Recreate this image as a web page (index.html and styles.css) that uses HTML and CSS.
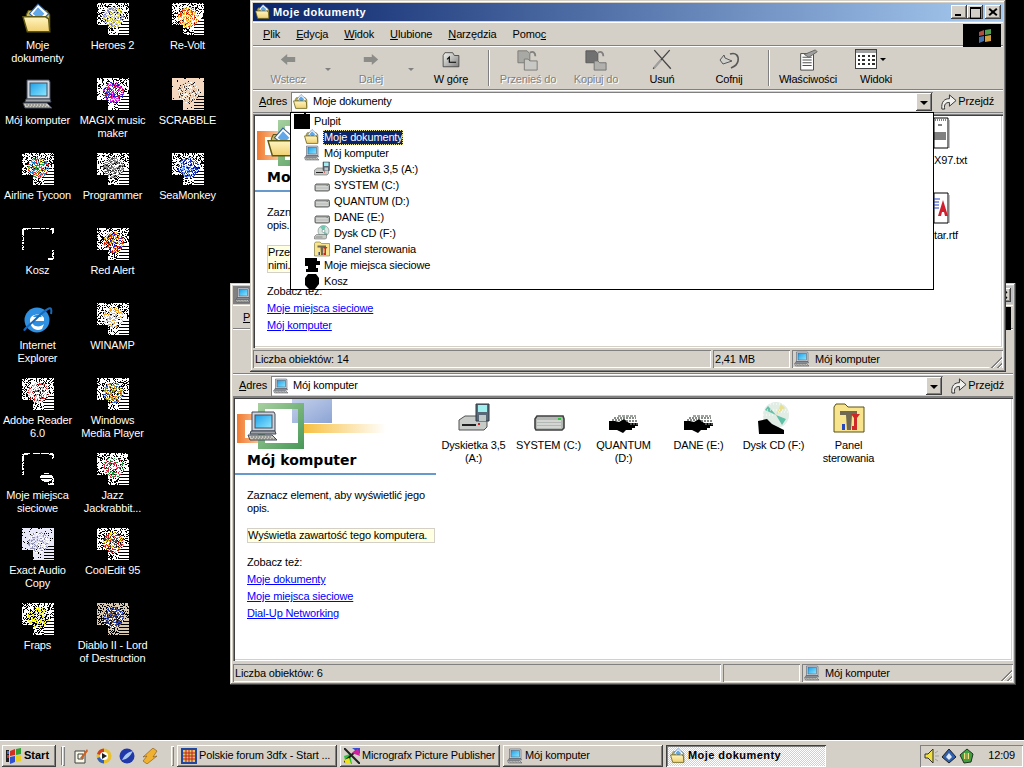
FILE: index.html
```html
<!DOCTYPE html>
<html lang="pl">
<head>
<meta charset="utf-8">
<title>Moje dokumenty</title>
<link rel="stylesheet" href="styles.css">
</head>
<body>
<svg class="defs" width="0" height="0" aria-hidden="true">
  <defs>
    <linearGradient id="g-screen" x1="0" y1="0" x2="1" y2="1"><stop offset="0" stop-color="#1ea0e8"/><stop offset="1" stop-color="#8fe8ff"/></linearGradient>
    <linearGradient id="g-folder" x1="0" y1="0" x2="0" y2="1"><stop offset="0" stop-color="#fff4c0"/><stop offset="1" stop-color="#f0d070"/></linearGradient>
    <linearGradient id="g-yellow" x1="0" y1="0" x2="1" y2="0"><stop offset="0" stop-color="#f8c040"/><stop offset="1" stop-color="#fff" /></linearGradient>
    <linearGradient id="g-blue" x1="0" y1="0" x2="1" y2="1"><stop offset="0" stop-color="#c4d0ec"/><stop offset="1" stop-color="#8ca4d4"/></linearGradient>
    <linearGradient id="g-orange" x1="0" y1="0" x2="1" y2="0"><stop offset="0" stop-color="#f07a30"/><stop offset="1" stop-color="#fcd0a8"/></linearGradient>
    <linearGradient id="g-green" x1="0" y1="0" x2="1" y2="1"><stop offset="0" stop-color="#a8d0a0"/><stop offset="1" stop-color="#489858"/></linearGradient>
    <linearGradient id="g-gray" x1="0" y1="0" x2="1" y2="1"><stop offset="0" stop-color="#f4f4f0"/><stop offset="1" stop-color="#808080"/></linearGradient>
    <symbol id="i-folder" viewBox="1 2 30 30">
      <path d="M5 13 7 9h17l3 4v14H7z" fill="#c8b860" stroke="#605810"/>
      <path d="M16 3 26 12 18 20 8 12z" fill="#fff" stroke="#3060a0"/>
      <path d="M16 6 22 12 17 17 11 12z" fill="#60a8e8"/>
      <path d="M2 15h21l3 2 1 12H6z" fill="url(#g-folder)" stroke="#605810" stroke-width="1.4"/>
    </symbol>
    <symbol id="i-computer" viewBox="0 0 32 32">
      <path d="M5 2h22l1 2v17H5z" fill="#d0d4dc" stroke="#404858"/>
      <rect x="8" y="5" width="17" height="13" fill="url(#g-screen)" stroke="#405060"/>
      <path d="M4 21h24l1 3H3z" fill="#a0a4a8" stroke="#404858"/>
      <path d="M1 25h24l5 5H3z" fill="#c8c8c0" stroke="#404858"/>
      <path d="M4 27h20M6 29h22" stroke="#707070" stroke-dasharray="2 1"/>
    </symbol>
    <symbol id="i-floppy" viewBox="0 0 32 32">
      <path d="M1 18 7 14h22v11l-3 3H1z" fill="#c8ccc8" stroke="#505050"/>
      <path d="M4 22h14v2H4z" fill="#202020"/><rect x="20" y="21" width="2" height="2" fill="#d02020"/>
      <path d="M18 2h13v17H18z" fill="#586878" stroke="#303840"/>
      <rect x="20" y="3" width="9" height="7" fill="#a0f0f0"/><rect x="21" y="13" width="7" height="6" fill="#c0c8c8"/>
    </symbol>
    <symbol id="i-hdd" viewBox="0 0 32 32">
      <g transform="translate(0 3)">
        <path d="M2 14 4 11h26l1 3v9l-2 2H3l-1-2z" fill="#b4b8b4" stroke="#404040" stroke-width="1.6"/>
        <path d="M4 16h24M4 19h24M4 22h24" stroke="#f4f4f4"/><rect x="25" y="13" width="3" height="2" fill="#30c040"/>
      </g>
    </symbol>
    <symbol id="i-hdd-bad" viewBox="0 0 32 32">
      <g transform="translate(0 3)">
        <path d="M1 16h6l4 1 5-3 5 4h9v3h-3v2h-3v2H18l-3 3-6-3H1z" fill="#000"/>
        <path d="M6 13h22M4 15h10M18 16h12M22 19h8" stroke="#606660" stroke-width="1.4" stroke-dasharray="2 1"/>
        <path d="M10 11h18" stroke="#808880" stroke-width="1.4" stroke-dasharray="3 1"/>
      </g>
    </symbol>
    <symbol id="i-cd" viewBox="0 0 32 32">
      <circle cx="19" cy="12" r="11" fill="#d8e8e0" stroke="#607070"/>
      <path d="M19 12 12 4a11 11 0 0 1 12-1zM19 12l9 6a11 11 0 0 1-7 5z" fill="#70c8b0"/>
      <circle cx="19" cy="12" r="3" fill="#fff" stroke="#607070"/>
      <path d="M1 23 5 19h20v7l-2 2H1z" fill="#c8ccc8" stroke="#505050"/>
      <path d="M3 24h14" stroke="#505050"/>
    </symbol>
    <symbol id="i-cd-bad" viewBox="0 0 32 32">
      <circle cx="18" cy="13" r="13" fill="#e0ece4"/>
      <path d="M18 13 10 4 7 8zM18 13l10 4-4 6z" fill="#60c0a8"/><path d="M18 13l5-11 4 4z" fill="#e8e090"/>
      <path d="M9 2h18M6 8h24M5 13h10M20 10h10" stroke="#fff" stroke-dasharray="1 2"/>
      <path d="M0 19 9 17 14 22 20 25 26 28 26 32H1z" fill="#000"/>
    </symbol>
    <symbol id="i-panel" viewBox="0 0 32 32">
      <path d="M1 5 3 2h9l3 3h16v25H1z" fill="#f8e48c" stroke="#585010"/>
      <path d="M7 9h17v4h-5l-1 15h-4l-1-15H7z" fill="#706850"/>
      <path d="M18 12l3 4v12h3V16l3-4z" fill="#d02828"/><rect x="9" y="22" width="3" height="6" fill="#2848c0"/>
      <rect x="19" y="24" width="5" height="4" fill="#d02828"/>
    </symbol>
    <symbol id="i-up" viewBox="0 0 32 32">
      <path d="M2 8 5 3h14l3 5h8v20H2z" fill="url(#g-gray)" stroke="#404040" stroke-width="1.5"/>
      <path d="M9 15 13 11v2h0v7h12" fill="none" stroke="#000" stroke-width="2"/>
    </symbol>
    <symbol id="i-back" viewBox="0 0 20 16"><path d="M1 8 9 1v4h10v6H9v4z" fill="#8c8c88"/></symbol>
    <symbol id="i-forward" viewBox="0 0 20 16"><path d="M19 8 11 1v4H1v6h10v4z" fill="#8c8c88"/></symbol>
    <symbol id="i-move" viewBox="0 0 24 24">
      <path d="M1 2h10l3 3v10H1z" fill="#a8a8a4" stroke="#787874"/>
      <path d="M8 11h4l2 2h8v10H8z" fill="#c8c8c4" stroke="#787874"/>
      <path d="M14 4c4-2 6 0 6 4" fill="none" stroke="#808080" stroke-width="2"/>
    </symbol>
    <symbol id="i-copy" viewBox="0 0 24 24">
      <path d="M1 2h10l3 3v10H1z" fill="#707070" stroke="#585858"/>
      <path d="M10 13h4l2 2h7v8H10z" fill="#b0b0ac" stroke="#707070"/>
      <path d="M14 4c4-2 6 0 6 4" fill="none" stroke="#808080" stroke-width="2"/>
    </symbol>
    <symbol id="i-del" viewBox="0 0 20 20"><path d="M3 1 18 18M17 1 2 18" stroke="#484848" stroke-width="1.2" fill="none"/><path d="M3 17 9 10" stroke="#a0a0a0" stroke-width="2"/></symbol>
    <symbol id="i-undo" viewBox="0 0 22 18"><path d="M12 3c6-2 9 2 8 7s-5 6-7 7" fill="none" stroke="#585858" stroke-width="1.6"/><path d="M2 9 6 4l1 3 7 3-9 3z" fill="#d0d0cc" stroke="#585858"/></symbol>
    <symbol id="i-props" viewBox="0 0 24 24">
      <path d="M4 5h14v18H4z" fill="#fff" stroke="#404040"/><path d="M6 9h10M6 12h10M6 15h10M6 18h10" stroke="#404040"/>
      <path d="M8 6 20 1l2 2-9 6z" fill="#a0a0a0" stroke="#606060"/>
    </symbol>
    <symbol id="i-views" viewBox="0 0 22 20">
      <rect x="0.500" y="0.500" width="21" height="19" fill="#fff" stroke="#404040"/><rect x="1" y="1" width="20" height="3" fill="#a0a0a0"/>
      <path d="M3 7h2M7 7h3M13 7h2M17 7h3M3 11h2M7 11h3M13 11h2M17 11h3M3 15h2M7 15h3M13 15h2M17 15h3" stroke="#303030" stroke-width="2"/>
    </symbol>
    <symbol id="i-go" viewBox="0 0 18 18">
      <path d="M2 17C1 9 5 6 10 6V2l7 6-7 6v-4C6 10 4 12 5 17z" fill="#f0f0ec" stroke="#303030"/>
    </symbol>
    <symbol id="i-flag" viewBox="0 0 16 16">
      <path d="M2 4 7 2v5L2 8z" fill="#b05040"/><path d="M8 2l6-1v5l-6 1z" fill="#50a050"/>
      <path d="M2 9l5-1v5l-5 2z" fill="#4070b0"/><path d="M8 8l6-1v6l-6 1z" fill="#d0a040"/>
    </symbol>
    <symbol id="i-blob-net" viewBox="0 0 16 16"><path d="M1 1h12v3h3v4h-4v3h2v4H2v-3h2V9H1z" fill="#000"/></symbol>
    <symbol id="i-blob-bin" viewBox="0 0 16 16"><path d="M4 1h8l3 4v6l-4 5H5l-4-4V5z" fill="#000"/></symbol>
    <symbol id="i-blob-desk" viewBox="0 0 16 16"><path d="M0 1h10V0h2v1h4v15H0z" fill="#000"/></symbol>
    <symbol id="i-ie" viewBox="0 0 32 32">
      <circle cx="15" cy="17" r="12.500" fill="#2f8fe0"/>
      <path d="M8 17c0-6 11-8 14-2v3H10c0 6 8 7 12 3l-2 5c-6 3-12-1-12-9z" fill="#fff"/>
      <path d="M11 14c2-3 7-3 9 0z" fill="#2f8fe0"/>
      <path d="M4 26C-2 30 10 20 18 12 25 6 31 1 29 11" fill="none" stroke="#1a68b8" stroke-width="2"/>
    </symbol>
    <symbol id="i-start" viewBox="0 0 16 16">
      <path d="M0 2h3v12H0z" fill="#202020"/><path d="M1 3h2v3H1z" fill="#4070d0"/><path d="M1 7h2v3H1z" fill="#d03030"/>
      <path d="M4 3 9 1v6L4 8z" fill="#d03020"/><path d="M10 1l5-1v6l-5 1z" fill="#30a030"/>
      <path d="M4 9l5-1v6l-5 2z" fill="#3050d0"/><path d="M10 8l5-1v6l-5 1z" fill="#e8d020"/>
    </symbol>
    <symbol id="i-note" viewBox="0 0 16 16"><path d="M2 3h10v12H2z" fill="#f8f8e8" stroke="#404040"/><path d="M5 6h5v5H5z" fill="none" stroke="#404040"/><path d="M7 10 14 1l1 2-6 8z" fill="#d06020"/></symbol>
    <symbol id="i-media" viewBox="0 0 16 16"><circle cx="8" cy="8" r="7.500" fill="#e8c030"/><path d="M8 .5A7.500 7.500 0 0 0 1 6l7 2z" fill="#d04020"/><path d="M1 10a7.500 7.500 0 0 0 7 5.500V8z" fill="#3060c0"/><circle cx="8" cy="8" r="4" fill="#fff"/><path d="M6 5l5 3-5 3z" fill="#202020"/></symbol>
    <symbol id="i-sea" viewBox="0 0 16 16"><circle cx="8" cy="8" r="7.500" fill="#2038a8"/><path d="M3 12C6 6 9 4 14 3 11 8 9 11 3 12z" fill="#a8c8f0"/></symbol>
    <symbol id="i-amp" viewBox="0 0 16 16"><path d="M11 0 15 3 11 9 15 8 5 16 1 13 5 8 1 9z" fill="#f0b030" stroke="#805010" stroke-width=".6"/></symbol>
    <symbol id="i-3dfx" viewBox="0 0 16 16"><rect width="16" height="16" fill="#2048a0"/><rect x="2" y="2" width="12" height="12" fill="#e8c060"/><path d="M2 5h12M2 8h12M2 11h12M5 2v12M8 2v12M11 2v12" stroke="#c02020"/></symbol>
    <symbol id="i-pp" viewBox="0 0 16 16"><path d="M8 0h8v6z" fill="#3050e0"/><path d="M0 8 6 6l2 10H2z" fill="#30c040"/><path d="M0 0l16 16M0 14 14 1" stroke="#202020" stroke-width="2"/><path d="M8 5 14 0l2 8z" fill="#d020a0"/><path d="M0 12l5-2 2 6H2z" fill="#f0e020"/></symbol>
    <symbol id="i-speaker" viewBox="0 0 16 16"><path d="M1 6h3l5-5v14L4 10H1z" fill="#f0e040" stroke="#303030"/><path d="M11 5l3-2M11 8h4M11 11l3 2" stroke="#a0a0a0"/></symbol>
    <symbol id="i-tray2" viewBox="0 0 16 16"><path d="M8 1 15 9 8 15 1 9z" fill="#3060b0" stroke="#202020"/><path d="M8 5 11 9 8 12 5 9z" fill="#e0e8f0"/></symbol>
    <symbol id="i-tray3" viewBox="0 0 16 16"><path d="M2 7 9 1l6 5-2 8-7 1z" fill="#40a040" stroke="#203020"/><path d="M6 5h5v6H6z" fill="#f0e080"/><path d="M7 6h3M7 8h3M7 10h3" stroke="#206020"/></symbol>
    <symbol id="i-notepad" viewBox="0 0 16 32"><path d="M0 1h14v30H0z" fill="#fff" stroke="#000"/><path d="M15 3v28" stroke="#808080"/><path d="M1 3h12" stroke="#000" stroke-dasharray="1 1"/><path d="M4 8h4M0 16h12M0 18h12M0 20h12M0 22h12" stroke="#000"/></symbol>
    <symbol id="i-rtf" viewBox="0 0 16 32"><path d="M0 1h14v30H0z" fill="#fff" stroke="#000"/><path d="M15 3v28" stroke="#808080"/><path d="M0 7h6M0 10h5M0 13h5M0 16h5" stroke="#2040c0"/><path d="M4 24 9 8l5 16h-3l-1-4H8l-1 4z" fill="#d02030"/></symbol>
    <symbol id="i-banner" viewBox="0 0 200 50">
      <rect x="57" y="0" width="40" height="24" fill="url(#g-blue)"/>
      <rect x="2" y="15" width="26" height="29" fill="url(#g-orange)"/>
      <rect x="10" y="21" width="20" height="18" fill="#fff"/>
      <rect x="69" y="25" width="82" height="9" fill="url(#g-yellow)"/>
      <path d="M23 4h46v46H23zM30 10v34h33V10z" fill="url(#g-green)" fill-rule="evenodd"/>
    </symbol>
  </defs>
</svg>

<main class="desktop">
  <section class="icons">
    <div class="dicon"><svg class="i32"><use href="#i-folder"/></svg><span>Moje dokumenty</span></div>
    <div class="dicon"><svg class="i32"><use href="#i-computer"/></svg><span>Mój komputer</span></div>
    <div class="dicon"><svg class="noise" data-seed="11" data-pal="#e02020,#2090e0,#20a040,#f0c020,#fff"></svg><span>Airline Tycoon</span></div>
    <div class="dicon"><svg class="noise" data-frame="1" data-seed="12"></svg><span>Kosz</span></div>
    <div class="dicon"><svg class="i32"><use href="#i-ie"/></svg><span>Internet Explorer</span></div>
    <div class="dicon"><svg class="noise" data-seed="13" data-pal="#e02020,#fff,#c0c0c0,#fff"></svg><span>Adobe Reader 6.0</span></div>
    <div class="dicon"><svg class="noise" data-frame="2" data-seed="14"></svg><span>Moje miejsca sieciowe</span></div>
    <div class="dicon"><svg class="noise" data-seed="15" data-base="#e8e8f8" data-dens="0.92" data-pal="#fff,#d8d8f0,#9090b0"></svg><span>Exact Audio Copy</span></div>
    <div class="dicon"><svg class="noise" data-seed="16" data-pal="#f0f000,#f0f000,#fff,#000"></svg><span>Fraps</span></div>

    <div class="dicon"><svg class="noise" data-seed="21" data-pal="#e8e040,#8080c0,#fff,#c0c0c0"></svg><span>Heroes 2</span></div>
    <div class="dicon"><svg class="noise" data-seed="22" data-pal="#f020e0,#fff,#e02020,#2020c0"></svg><span>MAGIX music maker</span></div>
    <div class="dicon"><svg class="noise" data-seed="23" data-pal="#fff,#a0a0a0,#404040,#808080"></svg><span>Programmer</span></div>
    <div class="dicon"><svg class="noise" data-seed="24" data-pal="#f03010,#f8c020,#2020c0,#fff"></svg><span>Red Alert</span></div>
    <div class="dicon"><svg class="noise" data-seed="25" data-pal="#f0a020,#fff,#fff,#c0c0c0"></svg><span>WINAMP</span></div>
    <div class="dicon"><svg class="noise" data-seed="26" data-pal="#e06020,#2050c0,#80a040,#d0b020,#fff"></svg><span>Windows Media Player</span></div>
    <div class="dicon"><svg class="noise" data-seed="27" data-pal="#d02040,#20a040,#fff,#fff"></svg><span>Jazz Jackrabbit...</span></div>
    <div class="dicon"><svg class="noise" data-seed="28" data-pal="#f0d000,#e02020,#fff,#404040"></svg><span>CoolEdit 95</span></div>
    <div class="dicon"><svg class="noise" data-seed="29" data-base="#d8c8b0" data-pal="#2040c0,#202040,#fff,#806040"></svg><span>Diablo II - Lord of Destruction</span></div>

    <div class="dicon"><svg class="noise" data-seed="31" data-pal="#f04010,#f8c020,#fff,#f8e080"></svg><span>Re-Volt</span></div>
    <div class="dicon"><svg class="noise" data-seed="32" data-base="#f4d8c0" data-dens="0.95" data-pal="#f0d8c0,#e0c0a0,#fff,#404040"></svg><span>SCRABBLE</span></div>
    <div class="dicon"><svg class="noise" data-seed="33" data-pal="#2030c0,#80b0f0,#fff,#2030c0"></svg><span>SeaMonkey</span></div>
  </section>

  <!-- Okno: Mój komputer (pod spodem) -->
  <article class="win win-back">
    <header class="title title-off">
      <svg class="i16"><use href="#i-computer"/></svg>
      <span class="caps"><b class="cap cap-min"></b><b class="cap cap-max"></b><b class="cap cap-close"></b></span>
    </header>
    <nav class="menu">
      <span><u>P</u>lik</span>
      <div class="throbber"><svg class="i16"><use href="#i-flag"/></svg></div>
    </nav>
    <div class="toolbar"></div>
    <div class="addr">
      <span class="addr-label"><u>A</u>dres</span>
      <div class="combo"><svg class="i16"><use href="#i-computer"/></svg><span>Mój komputer</span><i class="combo-btn"></i></div>
      <div class="go"><svg class="i-go"><use href="#i-go"/></svg><span>Przejdź</span></div>
    </div>
    <div class="body">
      <aside class="panel">
        <div class="banner"><svg class="banner-bg"><use href="#i-banner"/></svg><svg class="banner-icon"><use href="#i-computer"/></svg></div>
        <h2>Mój komputer</h2>
        <p class="p-desc">Zaznacz element, aby wyświetlić jego opis.</p>
        <p class="tip">Wyświetla zawartość tego komputera.</p>
        <p class="see">Zobacz też:</p>
        <a class="lnk">Moje dokumenty</a>
        <a class="lnk">Moje miejsca sieciowe</a>
        <a class="lnk">Dial-Up Networking</a>
      </aside>
      <div class="files">
        <div class="file"><svg class="i32"><use href="#i-floppy"/></svg><span>Dyskietka 3,5 (A:)</span></div>
        <div class="file"><svg class="i32"><use href="#i-hdd"/></svg><span>SYSTEM (C:)</span></div>
        <div class="file"><svg class="i32"><use href="#i-hdd-bad"/></svg><span>QUANTUM (D:)</span></div>
        <div class="file"><svg class="i32"><use href="#i-hdd-bad"/></svg><span>DANE (E:)</span></div>
        <div class="file"><svg class="i32"><use href="#i-cd-bad"/></svg><span>Dysk CD (F:)</span></div>
        <div class="file"><svg class="i32"><use href="#i-panel"/></svg><span>Panel sterowania</span></div>
      </div>
    </div>
    <footer class="status">
      <div class="sp sp-main">Liczba obiektów: 6</div>
      <div class="sp sp-size"></div>
      <div class="sp sp-zone"><svg class="i16"><use href="#i-computer"/></svg><span>Mój komputer</span></div>
      <i class="grip"></i>
    </footer>
  </article>

  <!-- Okno: Moje dokumenty (aktywne) -->
  <article class="win win-front">
    <header class="title">
      <svg class="i16"><use href="#i-folder"/></svg>
      <span class="title-text">Moje dokumenty</span>
      <span class="caps"><b class="cap cap-min"></b><b class="cap cap-max"></b><b class="cap cap-close"></b></span>
    </header>
    <nav class="menu">
      <span><u>P</u>lik</span><span><u>E</u>dycja</span><span><u>W</u>idok</span><span><u>U</u>lubione</span><span><u>N</u>arzędzia</span><span>Pomo<u>c</u></span>
      <div class="throbber"><svg class="i16"><use href="#i-flag"/></svg></div>
    </nav>
    <div class="toolbar">
      <div class="tb w68 off"><svg class="t-back"><use href="#i-back"/></svg><span>Wstecz</span></div>
      <i class="drop w15"></i>
      <div class="tb w68 off"><svg class="t-back"><use href="#i-forward"/></svg><span>Dalej</span></div>
      <i class="drop w13"></i>
      <div class="tb w66"><svg class="t-up"><use href="#i-up"/></svg><span>W górę</span></div>
      <i class="sep"></i>
      <div class="tb w68 off"><svg class="t-ico"><use href="#i-move"/></svg><span>Przenieś do</span></div>
      <div class="tb w68 off"><svg class="t-ico"><use href="#i-copy"/></svg><span>Kopiuj do</span></div>
      <div class="tb w64"><svg class="t-ico"><use href="#i-del"/></svg><span>Usuń</span></div>
      <div class="tb w70"><svg class="t-ico"><use href="#i-undo"/></svg><span>Cofnij</span></div>
      <i class="sep"></i>
      <div class="tb w68"><svg class="t-ico"><use href="#i-props"/></svg><span>Właściwości</span></div>
      <div class="tb w68"><div class="views"><svg class="t-views"><use href="#i-views"/></svg><i class="mini-arrow"></i></div><span>Widoki</span></div>
    </div>
    <div class="addr">
      <span class="addr-label"><u>A</u>dres</span>
      <div class="combo"><svg class="i16"><use href="#i-folder"/></svg><span>Moje dokumenty</span><i class="combo-btn"></i></div>
      <div class="go"><svg class="i-go"><use href="#i-go"/></svg><span>Przejdź</span></div>
    </div>
    <div class="body">
      <aside class="panel">
        <div class="banner"><svg class="banner-bg"><use href="#i-banner"/></svg><svg class="banner-icon"><use href="#i-folder"/></svg></div>
        <h2>Mo</h2>
        <p class="p-desc">Zazn<br>opis.</p>
        <p class="tip tip-two">Prze<br>nimi.</p>
        <p class="see">Zobacz też:</p>
        <a class="lnk">Moje miejsca sieciowe</a>
        <a class="lnk">Mój komputer</a>
      </aside>
      <div class="docs">
        <div class="doc"><svg class="i-half"><use href="#i-notepad"/></svg><span>X97.txt</span></div>
        <div class="doc"><svg class="i-half"><use href="#i-rtf"/></svg><span>tar.rtf</span></div>
      </div>
    </div>
    <footer class="status">
      <div class="sp sp-main">Liczba obiektów: 14</div>
      <div class="sp sp-size">2,41 MB</div>
      <div class="sp sp-zone"><svg class="i16"><use href="#i-computer"/></svg><span>Mój komputer</span></div>
      <i class="grip"></i>
    </footer>
  </article>

  <!-- Rozwinięta lista adresu -->
  <ul class="tree">
    <li class="l0"><svg class="i16"><use href="#i-blob-desk"/></svg><span>Pulpit</span></li>
    <li class="l1"><svg class="i16"><use href="#i-folder"/></svg><span class="sel">Moje dokumenty</span></li>
    <li class="l1"><svg class="i16"><use href="#i-computer"/></svg><span>Mój komputer</span></li>
    <li class="l2"><svg class="i16"><use href="#i-floppy"/></svg><span>Dyskietka 3,5 (A:)</span></li>
    <li class="l2"><svg class="i16"><use href="#i-hdd"/></svg><span>SYSTEM (C:)</span></li>
    <li class="l2"><svg class="i16"><use href="#i-hdd"/></svg><span>QUANTUM (D:)</span></li>
    <li class="l2"><svg class="i16"><use href="#i-hdd"/></svg><span>DANE (E:)</span></li>
    <li class="l2"><svg class="i16"><use href="#i-cd"/></svg><span>Dysk CD (F:)</span></li>
    <li class="l2"><svg class="i16"><use href="#i-panel"/></svg><span>Panel sterowania</span></li>
    <li class="l1"><svg class="i16"><use href="#i-blob-net"/></svg><span>Moje miejsca sieciowe</span></li>
    <li class="l1"><svg class="i16"><use href="#i-blob-bin"/></svg><span>Kosz</span></li>
  </ul>
</main>

<footer class="taskbar">
  <div class="tbtn start"><svg class="i16"><use href="#i-start"/></svg><b>Start</b></div>
  <i class="grab"></i>
  <div class="quick">
    <svg class="i16"><use href="#i-note"/></svg>
    <svg class="i16"><use href="#i-media"/></svg>
    <svg class="i16"><use href="#i-sea"/></svg>
    <svg class="i16"><use href="#i-amp"/></svg>
  </div>
  <i class="grab"></i>
  <div class="tbtn task"><svg class="i16"><use href="#i-3dfx"/></svg><span>Polskie forum 3dfx - Start ...</span></div>
  <div class="tbtn task"><svg class="i16"><use href="#i-pp"/></svg><span>Micrografx Picture Publisher</span></div>
  <div class="tbtn task"><svg class="i16"><use href="#i-computer"/></svg><span>Mój komputer</span></div>
  <div class="tbtn task active"><svg class="i16"><use href="#i-folder"/></svg><b>Moje dokumenty</b></div>
  <div class="tray">
    <svg class="i16"><use href="#i-speaker"/></svg>
    <svg class="i16"><use href="#i-tray2"/></svg>
    <svg class="i16"><use href="#i-tray3"/></svg>
    <span class="clock">12:09</span>
  </div>
</footer>
<script src="noise.js"></script>
</body>
</html>
```

FILE: styles.css
```css
* { box-sizing: border-box; }
html, body { margin: 0; height: 768px; overflow: hidden; background: #000; }
body {
  display: flex; flex-direction: column; width: 1024px;
  font: 11px/13px "Liberation Sans", Arial, sans-serif; color: #000; letter-spacing: -.15px;
}
svg { display: block; flex: none; }
.defs { position: absolute; }
.i16 { width: 16px; height: 16px; }
.i32 { width: 32px; height: 32px; }

/* pulpit */
.desktop { position: relative; flex: 1; min-height: 0; }
.icons {
  display: grid; grid-auto-flow: column;
  grid-template-rows: repeat(9, 75px); grid-template-columns: repeat(3, 75px);
  padding-top: 3px;
}
.dicon { display: flex; flex-direction: column; align-items: center; color: #fff; text-align: center; }
.dicon span { margin-top: 4px; width: 74px; }
.noise { width: 32px; height: 32px; shape-rendering: crispEdges; }

/* okna */
.win {
  position: absolute; display: flex; flex-direction: column; padding: 3px;
  background: #d4d0c8;
  box-shadow: inset -1px -1px #404040, inset 1px 1px #d4d0c8, inset -2px -2px #808080, inset 2px 2px #fff;
}
.win-front { left: 250px; top: 0; width: 756px; height: 372px; }
.win-back { left: 230px; top: 283px; width: 786px; height: 402px; }

.title {
  display: flex; align-items: center; flex: none; height: 18px; margin-bottom: 1px; padding: 0 2px;
  background: linear-gradient(90deg, #0a246a, #a6caf0); color: #fff;
}
.title-off { background: linear-gradient(90deg, #808080, #c0c0c0); color: #d4d0c8; }
.title-text { margin-left: 2px; font: 700 11px/16px "Liberation Sans", sans-serif; letter-spacing: .45px; }
.caps { display: flex; margin-left: auto; }
.cap {
  display: block; position: relative; width: 16px; height: 14px;
  background: #d4d0c8; box-shadow: inset -1px -1px #404040, inset 1px 1px #fff, inset -2px -2px #808080;
}
.cap-close { margin-left: 2px; }
.cap-min::after { content: ""; position: absolute; left: 4px; bottom: 3px; width: 6px; height: 2px; background: #000; }
.cap-max::after { content: ""; position: absolute; left: 3px; top: 2px; width: 9px; height: 9px; border: 1px solid #000; border-top-width: 2px; }
.cap-close::before, .cap-close::after { content: ""; position: absolute; left: 3px; top: 6px; width: 10px; height: 2px; background: #000; transform: rotate(40deg); }
.cap-close::after { transform: rotate(-40deg); }

.menu {
  display: flex; align-items: center; flex: none; gap: 16px; height: 24px; padding-left: 10px;
  border-top: 1px solid #fff; border-bottom: 1px solid #808080; position: relative;
}
.menu u, .addr-label u { text-underline-offset: 1px; }
.throbber {
  position: absolute; right: 2px; top: 1px; width: 38px; height: 23px; background: #000;
  display: flex; align-items: center; justify-content: center;
}
.throbber svg { filter: blur(.5px); margin-left: 6px; }

.toolbar {
  display: flex; align-items: stretch; flex: none; height: 44px; padding: 3px 0 0 1px;
  border-top: 1px solid #fff; border-bottom: 1px solid #808080;
}
.win-back .toolbar { height: 45px; }
.tb { display: flex; flex-direction: column; align-items: center; justify-content: flex-end; padding-bottom: 3px; flex: none; }
.tb span { margin-top: 2px; white-space: nowrap; }
.tb.off { color: #808080; }
.tb.off span { text-shadow: 1px 1px 0 #fff; }
.w64 { width: 64px; } .w66 { width: 66px; } .w68 { width: 68px; } .w70 { width: 70px; }
.w13 { width: 13px; } .w15 { width: 15px; }
.t-back { width: 16px; height: 13px; margin-bottom: 5px; }
.t-up { width: 20px; height: 18px; margin-bottom: 2px; }
.t-ico { width: 22px; height: 22px; }
.t-views { width: 22px; height: 20px; }
.views { display: flex; align-items: center; gap: 3px; margin-left: -11px; margin-bottom: 2px; }
.mini-arrow { width: 0; height: 0; border: 3px solid transparent; border-top: 3px solid #000; border-bottom: 0; }
.drop { position: relative; flex: none; }
.drop::after { content: ""; position: absolute; left: 3px; top: 18px; border: 3px solid transparent; border-top-color: #808080; border-bottom: 0; }
.sep { flex: none; width: 2px; margin: 0 4px 3px; background: #808080; border-right: 1px solid #fff; }

.addr {
  display: flex; align-items: center; flex: none; height: 23px; padding-left: 6px;
  border-top: 1px solid #fff; border-bottom: 1px solid #808080;
}
.addr-label { width: 32px; flex: none; }
.combo {
  display: flex; align-items: center; flex: 1; height: 20px; gap: 4px; padding-left: 2px; background: #fff;
  box-shadow: inset 1px 1px #808080, inset -1px -1px #d4d0c8;
}
.combo-btn {
  position: relative; margin-left: auto; margin-right: 1px; width: 16px; height: 18px; background: #d4d0c8;
  box-shadow: inset -1px -1px #404040, inset 1px 1px #fff, inset -2px -2px #808080;
}
.combo-btn::after { content: ""; position: absolute; left: 4px; top: 8px; border: 4px solid transparent; border-top-color: #000; border-bottom: 0; }
.go { display: flex; align-items: center; justify-content: flex-end; gap: 1px; width: 70px; flex: none; padding-right: 9px; }
.i-go { width: 17px; height: 17px; }

.body {
  position: relative; display: flex; flex: 1; min-height: 0; margin-top: 1px; background: #fff;
  box-shadow: inset 1px 1px #808080, inset 2px 2px #404040, inset -1px -1px #fff, inset -2px -2px #d4d0c8;
}
.win-back .body { margin-top: 0; }
.panel { width: 201px; flex: none; margin: 2px 0 0 2px; display: flex; flex-direction: column; }
.banner { position: relative; height: 50px; flex: none; }
.banner-bg { width: 200px; height: 50px; }
.banner-icon { position: absolute; left: 12px; top: 11px; width: 32px; height: 32px; }
.panel h2 {
  margin: 2px 0 0; padding: 0 0 3px 12px; border-bottom: 2px solid #6699cc; height: 24px;
  font: 700 14px/18px "DejaVu Sans", sans-serif; letter-spacing: 0; white-space: nowrap;
}
.panel p { margin: 0 0 0 12px; width: 188px; }
.panel .p-desc { margin-top: 14px; }
.panel .tip { margin-top: 13px; padding: 1px; background: #ffffe1; box-shadow: inset 0 0 0 1px #d4d0c8; }
.panel .tip-two { margin-bottom: -1px; }
.panel .see { margin-top: 13px; }
.lnk { margin: 4px 0 0 12px; color: #0000ff; text-decoration: underline; }

.files { display: flex; align-items: flex-start; padding-top: 5px; }
.file { width: 75px; display: flex; flex-direction: column; align-items: center; text-align: center; }
.file span { margin-top: 5px; width: 74px; }
.docs { margin-left: auto; padding-top: 3px; width: 69px; display: flex; flex-direction: column; }
.doc { height: 75px; display: flex; flex-direction: column; }
.doc span { margin-top: 5px; }
.i-half { width: 16px; height: 32px; }

.status { display: flex; flex: none; height: 20px; position: relative; padding-top: 1px; margin-top: 1px; }
.win-back .status { padding-top: 2px; }
.sp { display: flex; align-items: center; gap: 5px; height: 18px; padding-left: 2px; box-shadow: inset 1px 1px #808080, inset -1px -1px #fff; white-space: nowrap; }
.sp-main { flex: 1; margin-right: 2px; }
.sp-size { width: 77px; margin-right: 2px; }
.sp-zone { width: 211px; }
.grip {
  position: absolute; right: 1px; bottom: 1px; width: 13px; height: 13px;
  background: repeating-linear-gradient(135deg, #d4d0c8 0 2px, #808080 2px 3.500px, #fff 3.500px 4.200px);
  clip-path: polygon(100% 0, 100% 100%, 0 100%);
}

/* lista */
.tree {
  position: absolute; left: 290px; top: 112px; width: 644px; height: 178px; margin: 0; padding: 0;
  list-style: none; background: #fff; border: 1px solid #000;
}
.tree li { display: flex; align-items: center; gap: 4px; height: 16px; }
.l0 { padding-left: 3px; } .l1 { padding-left: 13px; } .l2 { padding-left: 23px; }
.sel { background: #0a246a; color: #fff; outline: 1px dotted #f0e8a0; outline-offset: -1px; padding: 1px 0 1px 1px; margin-left: -1px; }

/* pasek zadań */
.taskbar {
  display: flex; align-items: center; flex: none; height: 28px; padding: 2px 0 0 2px; background: #d4d0c8;
  border-top: 1px solid #fff; box-shadow: inset 0 1px #d4d0c8;
}
.tbtn {
  display: flex; align-items: center; gap: 2px; flex: none; height: 22px; background: #d4d0c8; padding-left: 4px; white-space: nowrap;
  box-shadow: inset -1px -1px #404040, inset 1px 1px #fff, inset -2px -2px #808080;
}
.start { width: 54px; letter-spacing: 0; }
.task { width: 160px; margin-right: 3px; }
.task span { overflow: hidden; }
.active {
  box-shadow: inset 1px 1px #404040, inset -1px -1px #fff, inset 2px 2px #808080;
  background: conic-gradient(#fff 25%, #d4d0c8 0 50%, #fff 0 75%, #d4d0c8 0) 0 0 / 2px 2px;
}
.active b { letter-spacing: .45px; }
.grab { flex: none; width: 3px; height: 20px; margin: 0 2px 0 4px; background: #d4d0c8; box-shadow: inset 1px 1px #fff, inset -1px -1px #808080; border-left: 0; }
.grab + .quick { margin-left: 6px; }
.start + .grab { margin-left: 6px; box-shadow: -2px 0 0 -1px #808080, inset 1px 1px #fff, inset -1px -1px #808080; }
.quick { display: flex; gap: 7px; margin-right: 9px; }
.quick + .grab { margin-right: 3px; }
.tray {
  display: flex; align-items: center; gap: 1px; flex: none; margin-left: 91px; width: 103px; height: 22px; padding-left: 4px;
  box-shadow: inset 1px 1px #808080, inset -1px -1px #fff;
}
.clock { margin-left: auto; margin-right: 8px; }
```

FILE: noise.js
```js
// Rysuje "zepsute" (rozsypane) ikony pulpitu jako piksele SVG.
document.querySelectorAll('svg.noise').forEach(function (svg) {
  var seed = Number(svg.dataset.seed) * 7919 + 17;
  function rnd() { seed = (seed * 1103515245 + 12345) & 0x7fffffff; return (seed >> 8) % 1000 / 1000; }
  var pal = (svg.dataset.pal || '#fff').split(',');
  var base = svg.dataset.base || '#fff';
  var dens = Number(svg.dataset.dens || 0.68);
  var frame = svg.dataset.frame;
  var paths = {};
  function put(c, x, y) { paths[c] = (paths[c] || '') + 'M' + x + ' ' + y + 'h1v1h-1z'; }
  svg.setAttribute('viewBox', '0 0 32 32');
  for (var y = 0; y < 32; y++) {
    for (var x = 0; x < 32; x++) {
      if (x < 11 && y > 21) continue;
      var r = rnd();
      if (frame) {
        var edge = (y < 2 || x < 2 || x > 29 || y > 29) && (x + y) % 9 !== 0 && (x < 6 || x > 25 || y < 1);
        if (edge && r < 0.8 && !(y > 5 && y < 22 && x > 2)) put('#fff', x, y);
        if (frame === '2' && x > 17 && y > 18 && y < 30 && ((x - 24) * (x - 24) + (y - 24) * (y - 24) * 2) < 40 && y % 4 !== 1) put('#fff', x, y);
        continue;
      }
      var dx = x - 16, dy = y - 14;
      var inner = dx * dx + dy * dy < 110;
      var stripes = x > 21 && y > 15;
      if (stripes && !inner) { if (y % 3 !== 0) put(base, x, y); continue; }
      if (inner && r < 0.78) { put(pal[Math.floor(rnd() * pal.length) % pal.length], x, y); continue; }
      if (rnd() < dens) put(base, x, y);
    }
  }
  Object.keys(paths).forEach(function (c) {
    var p = document.createElementNS('http://www.w3.org/2000/svg', 'path');
    p.setAttribute('fill', c);
    p.setAttribute('d', paths[c]);
    svg.appendChild(p);
  });
});
```
